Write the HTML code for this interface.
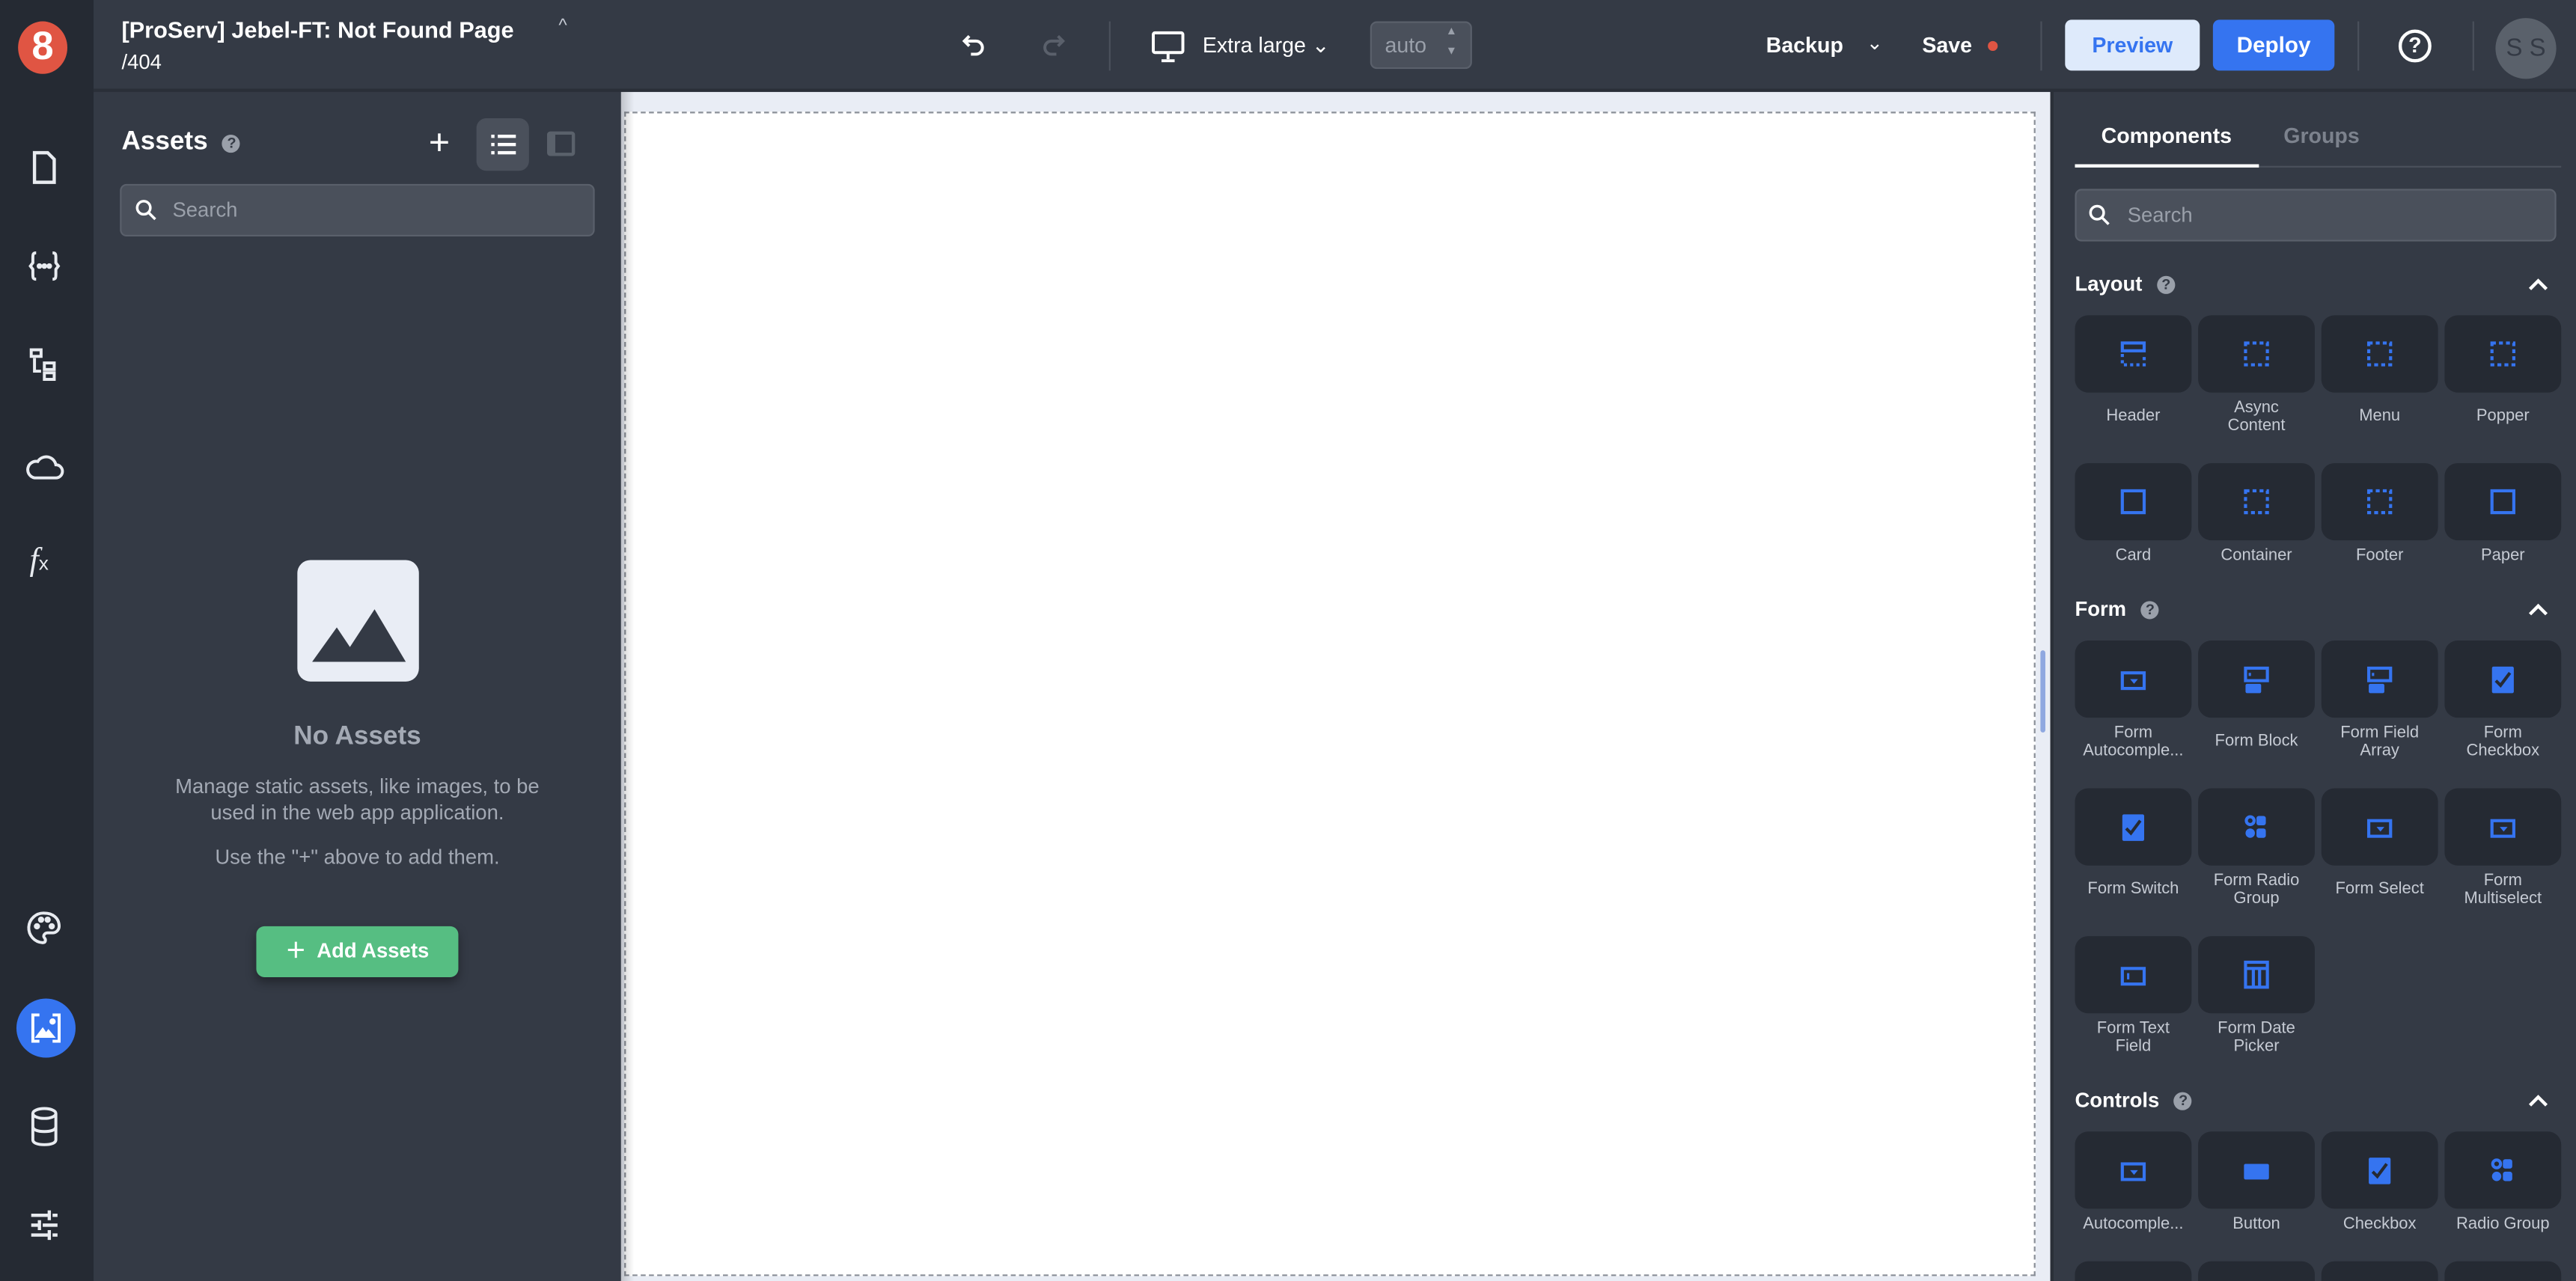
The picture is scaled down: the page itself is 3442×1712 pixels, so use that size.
<!DOCTYPE html>
<html><head><meta charset="utf-8">
<style>
html,body{margin:0;padding:0;width:3442px;height:1712px;overflow:hidden;background:#343a45;}
#w{width:1568px;height:780px;transform:scale(2.19515,2.19487);transform-origin:0 0;overflow:hidden;position:relative;background:#343a45;font-family:"Liberation Sans",sans-serif;color:#fff;}
.a{position:absolute;}
.rail{left:0;top:0;width:57px;height:780px;background:#252a33;}
.top{left:57px;top:0;width:1511px;height:54px;background:#343a45;border-bottom:2px solid #2a2f38;}
.panel{left:57px;top:56px;width:321px;height:724px;background:#343a45;}
.canvas{left:378px;top:56px;width:870px;height:724px;background:#e9edf5;}
.page{left:380px;top:68px;width:857px;height:707px;background:#fff;border:1px dashed #8a8f98;}
.right{left:1248px;top:56px;width:320px;height:724px;background:#343a45;border-left:2px solid #2a2f38;}
.tile{position:absolute;width:71px;height:47px;background:#252a33;border-radius:8px;}
.tile svg{position:absolute;left:26px;top:14px;width:19px;height:19px;}
.lbl{position:absolute;width:75px;text-align:center;font-size:10px;line-height:10.5px;color:#c5cad3;}
.sec{position:absolute;font-size:12.5px;font-weight:bold;color:#fff;}
.q{display:inline-block;width:11px;height:11px;border-radius:50%;background:#9aa0aa;color:#343a45;font-size:9px;line-height:11px;text-align:center;font-weight:bold;vertical-align:1px;margin-left:9px;}
</style></head><body><div id="w">
<div class="a rail"></div>
<div class="a top"></div>
<div class="a panel"></div>
<div class="a canvas"></div>
<div class="a page"></div>
<div class="a" style="left:1242px;top:396px;width:3px;height:50px;background:#8fa8e0;border-radius:2px"></div>
<div class="a right"></div>

<!-- rail -->
<div class="a" style="left:11px;top:13px;width:30px;height:32px;border-radius:50%;background:#e05543;text-align:center;font-weight:bold;font-size:24px;line-height:32px;">8</div>
<svg class="a" style="left:15px;top:90px" width="24" height="24" viewBox="0 0 24 24" fill="none" stroke="#e8ebf0" stroke-width="2"><path d="M6 3h8l4 4v14H6z"/></svg>
<svg class="a" style="left:15px;top:150px" width="24" height="24" viewBox="0 0 24 24" fill="none" stroke="#e8ebf0" stroke-width="1.8"><path d="M7 4c-2 0-2 1-2 3v3l-1.5 2L5 14v3c0 2 0 3 2 3M17 4c2 0 2 1 2 3v3l1.5 2L19 14v3c0 2 0 3-2 3"/><circle cx="9" cy="12" r=".8" fill="#e8ebf0"/><circle cx="12" cy="12" r=".8" fill="#e8ebf0"/><circle cx="15" cy="12" r=".8" fill="#e8ebf0"/></svg>
<svg class="a" style="left:15px;top:210px" width="24" height="24" viewBox="0 0 24 24" fill="none" stroke="#e8ebf0" stroke-width="1.8"><rect x="4" y="3" width="6" height="4"/><path d="M6 8v8h4"/><rect x="12" y="11" width="6" height="4"/><rect x="12" y="17" width="6" height="4"/></svg>
<svg class="a" style="left:14px;top:272px" width="26" height="24" viewBox="0 0 26 24" fill="none" stroke="#e8ebf0" stroke-width="1.8"><path d="M7 19h13a4 4 0 0 0 0-8 6 6 0 0 0-11-2 5 5 0 0 0-2 10z"/></svg>
<div class="a" style="left:18px;top:330px;font-family:'Liberation Serif',serif;font-style:italic;font-size:20px;color:#e8ebf0">f<span style="font-size:12px;font-style:normal;font-family:'Liberation Sans'">x</span></div>
<svg class="a" style="left:15px;top:553px" width="24" height="24" viewBox="0 0 24 24" fill="none" stroke="#e8ebf0" stroke-width="1.8"><path d="M12 3a9 9 0 0 0-1 18c2 0 2-2 1-3s0-3 2-3h3a4 4 0 0 0 4-4c0-5-4-8-9-8z"/><circle cx="7.5" cy="11" r="1" fill="#e8ebf0"/><circle cx="10" cy="7" r="1" fill="#e8ebf0"/><circle cx="14" cy="7" r="1" fill="#e8ebf0"/><circle cx="16.5" cy="11" r="1" fill="#e8ebf0"/></svg>
<div class="a" style="left:10px;top:608px;width:36px;height:36px;border-radius:50%;background:#3574f0"></div>
<svg class="a" style="left:16px;top:614px" width="24" height="24" viewBox="0 0 24 24" fill="none" stroke="#fff" stroke-width="1.8"><path d="M8 4H4v16h4M16 4h4v16h-4"/><path d="M7 17l3-4 2 3 1.5-2 2.5 3z" fill="#fff"/><circle cx="16" cy="8" r="1" fill="#fff"/></svg>
<svg class="a" style="left:15px;top:673px" width="24" height="26" viewBox="0 0 24 26" fill="none" stroke="#e8ebf0" stroke-width="1.8"><ellipse cx="12" cy="5" rx="7" ry="3"/><path d="M5 5v16c0 2 3 3 7 3s7-1 7-3V5M5 13c0 2 3 3 7 3s7-1 7-3"/></svg>
<svg class="a" style="left:15px;top:734px" width="24" height="24" viewBox="0 0 24 24" fill="none" stroke="#e8ebf0" stroke-width="2"><path d="M4 6h10M17 6h3M15 3v6M4 12h4M11 12h9M9 9v6M4 18h10M17 18h3M15 15v6"/></svg>

<!-- top bar -->
<div class="a" style="left:74px;top:10px;font-size:14px;font-weight:bold">[ProServ] Jebel-FT: Not Found Page</div>
<div class="a" style="left:340px;top:10px;font-size:11px;color:#c5cad3">&#94;</div>
<div class="a" style="left:74px;top:31px;font-size:12.5px">/404</div>
<svg class="a" style="left:584px;top:19px" width="18" height="18" viewBox="0 0 18 18" fill="none" stroke="#fff" stroke-width="1.8"><path d="M6 3L3 6l3 3M3 6h7a4 4 0 0 1 0 8H7"/></svg>
<svg class="a" style="left:632px;top:19px" width="18" height="18" viewBox="0 0 18 18" fill="none" stroke="#5a606b" stroke-width="1.8"><path d="M12 3l3 3-3 3M15 6H8a4 4 0 0 0 0 8h3"/></svg>
<div class="a" style="left:675px;top:13px;width:1px;height:30px;background:#4a505b"></div>
<svg class="a" style="left:700px;top:17px" width="22" height="22" viewBox="0 0 22 22" fill="none" stroke="#fff" stroke-width="1.8"><rect x="2" y="3" width="18" height="12" rx="1"/><path d="M11 15v4M7 20h8"/></svg>
<div class="a" style="left:732px;top:20px;font-size:13px">Extra large &#8964;</div>
<div class="a" style="left:834px;top:13px;width:62px;height:29px;background:#4a505b;border:1px solid #5a606b;border-radius:4px;box-sizing:border-box"></div>
<div class="a" style="left:843px;top:20px;font-size:13px;color:#9aa0aa">auto</div>
<div class="a" style="left:880px;top:14px;font-size:7px;color:#9aa0aa;line-height:12px">&#9650;<br>&#9660;</div>
<div class="a" style="left:1075px;top:20px;font-size:13px;font-weight:bold">Backup</div>
<div class="a" style="left:1136px;top:19px;font-size:12px">&#8964;</div>
<div class="a" style="left:1170px;top:20px;font-size:13px;font-weight:bold">Save</div>
<div class="a" style="left:1210px;top:25px;width:6px;height:6px;border-radius:50%;background:#e05543"></div>
<div class="a" style="left:1242px;top:13px;width:1px;height:30px;background:#4a505b"></div>
<div class="a" style="left:1257px;top:12px;width:82px;height:31px;background:#deeafb;border-radius:4px;color:#3574f0;font-weight:bold;font-size:13px;text-align:center;line-height:31px">Preview</div>
<div class="a" style="left:1347px;top:12px;width:74px;height:31px;background:#3574f0;border-radius:4px;font-weight:bold;font-size:13.5px;text-align:center;line-height:31px">Deploy</div>
<div class="a" style="left:1435px;top:13px;width:1px;height:30px;background:#4a505b"></div>
<div class="a" style="left:1460px;top:18px;width:16px;height:16px;border:2px solid #fff;border-radius:50%;text-align:center;font-size:13px;font-weight:bold;line-height:16px">?</div>
<div class="a" style="left:1505px;top:13px;width:1px;height:30px;background:#4a505b"></div>
<div class="a" style="left:1519px;top:11px;width:37px;height:37px;border-radius:50%;background:#5a616b;color:#343a45;font-size:15px;text-align:center;line-height:37px">S S</div>

<!-- assets panel -->
<div class="a" style="left:74px;top:78px;font-size:16px;font-weight:bold">Assets<span class="q" style="font-size:9px">?</span></div>
<div class="a" style="left:261px;top:74px;font-size:22px;font-weight:300">+</div>
<div class="a" style="left:290px;top:72px;width:32px;height:32px;background:#4a505b;border-radius:6px"></div>
<svg class="a" style="left:297px;top:79px" width="18" height="18" viewBox="0 0 18 18" fill="#fff"><rect x="2" y="3" width="2" height="2"/><rect x="6" y="3" width="11" height="2"/><rect x="2" y="8" width="2" height="2"/><rect x="6" y="8" width="11" height="2"/><rect x="2" y="13" width="2" height="2"/><rect x="6" y="13" width="11" height="2"/></svg>
<div class="a" style="left:333px;top:80px;width:17px;height:15px;border:2px solid #5a616b;border-left-width:5px;border-radius:2px;box-sizing:border-box"></div>
<div class="a" style="left:73px;top:112px;width:289px;height:32px;background:#4a505b;border:1px solid #5a606b;border-radius:4px;box-sizing:border-box"></div>
<svg class="a" style="left:82px;top:121px" width="14" height="14" viewBox="0 0 14 14" fill="none" stroke="#fff" stroke-width="1.6"><circle cx="5.5" cy="5.5" r="4"/><path d="M8.5 8.5l4 4"/></svg>
<div class="a" style="left:105px;top:121px;font-size:12.5px;color:#9aa0aa">Search</div>
<div class="a" style="left:181px;top:341px;width:74px;height:74px;background:#e9edf5;border-radius:8px"></div>
<svg class="a" style="left:181px;top:341px" width="74" height="74" viewBox="0 0 74 74"><path d="M9 62l15-21 8 12 15-23 19 32z" fill="#343a45"/></svg>
<div class="a" style="left:57px;top:440px;width:321px;text-align:center;font-size:16px;font-weight:bold;color:#a3a9b4">No Assets</div>
<div class="a" style="left:95px;top:471px;width:245px;text-align:center;font-size:12.5px;line-height:16px;color:#a3a9b4">Manage static assets, like images, to be used in the web app application.</div>
<div class="a" style="left:57px;top:515px;width:321px;text-align:center;font-size:12.5px;color:#a3a9b4">Use the "+" above to add them.</div>
<div class="a" style="left:156px;top:564px;width:123px;height:31px;background:#56be82;border-radius:5px;box-shadow:0 3px 6px rgba(0,0,0,.35);font-size:12.5px;font-weight:bold;line-height:31px;text-align:center">&#65291;&nbsp; Add Assets</div>
<div class="a" style="left:378px;top:56px;width:8px;height:724px;background:linear-gradient(90deg,rgba(0,0,0,.18),rgba(0,0,0,0))"></div>

<!-- right panel -->
<div class="a" style="left:1279px;top:75px;font-size:13px;font-weight:bold">Components</div>
<div class="a" style="left:1390px;top:75px;font-size:13px;font-weight:bold;color:#7c828d">Groups</div>
<div class="a" style="left:1263px;top:101px;width:296px;height:1px;background:#4a505b"></div>
<div class="a" style="left:1263px;top:100px;width:112px;height:2px;background:#fff"></div>
<div class="a" style="left:1263px;top:115px;width:293px;height:32px;background:#4a505b;border:1px solid #5a606b;border-radius:4px;box-sizing:border-box"></div>
<svg class="a" style="left:1271px;top:124px" width="14" height="14" viewBox="0 0 14 14" fill="none" stroke="#fff" stroke-width="1.6"><circle cx="5.5" cy="5.5" r="4"/><path d="M8.5 8.5l4 4"/></svg>
<div class="a" style="left:1295px;top:124px;font-size:12.5px;color:#9aa0aa">Search</div>

<div class="sec" style="left:1263px;top:166px">Layout<span class="q">?</span></div>
<div class="sec" style="left:1263px;top:364px">Form<span class="q">?</span></div>
<div class="sec" style="left:1263px;top:663px">Controls<span class="q">?</span></div>
<svg class="a" style="left:1538px;top:168px" width="14" height="10" viewBox="0 0 14 10" fill="none" stroke="#fff" stroke-width="2"><path d="M2 8l5-5 5 5"/></svg>
<svg class="a" style="left:1538px;top:366px" width="14" height="10" viewBox="0 0 14 10" fill="none" stroke="#fff" stroke-width="2"><path d="M2 8l5-5 5 5"/></svg>
<svg class="a" style="left:1538px;top:665px" width="14" height="10" viewBox="0 0 14 10" fill="none" stroke="#fff" stroke-width="2"><path d="M2 8l5-5 5 5"/></svg>

<svg width="0" height="0" style="position:absolute">
<defs>
<g id="dash"><rect x="3" y="3" width="14" height="14" fill="none" stroke="#3574f0" stroke-width="2" stroke-dasharray="2.5 2"/></g>
<g id="sq"><rect x="3" y="3" width="14" height="14" fill="none" stroke="#3574f0" stroke-width="2"/></g>
<g id="hdr"><rect x="3" y="3" width="14" height="5" fill="none" stroke="#3574f0" stroke-width="2"/><path d="M3 10v7h14v-7" fill="none" stroke="#3574f0" stroke-width="2" stroke-dasharray="2 2"/></g>
<g id="sel"><rect x="3" y="6" width="14" height="10" fill="none" stroke="#3574f0" stroke-width="2"/><path d="M8 10h5l-2.5 3z" fill="#3574f0"/></g>
<g id="blk"><rect x="3" y="3" width="14" height="8" fill="none" stroke="#3574f0" stroke-width="2"/><rect x="5" y="6" width="1.5" height="2" fill="#3574f0"/><rect x="3" y="13" width="10" height="6" rx="1" fill="#3574f0"/></g>
<g id="chk"><rect x="3" y="2" width="14" height="17" rx="1" fill="#3574f0"/><path d="M5.5 11l3 3 6-8" fill="none" stroke="#252a33" stroke-width="2"/></g>
<g id="rad"><circle cx="6" cy="6" r="2.5" fill="none" stroke="#3574f0" stroke-width="2"/><circle cx="6" cy="14" r="3" fill="#3574f0"/><rect x="10" y="3" width="6" height="6" rx="1.5" fill="#3574f0"/><rect x="10" y="11" width="6" height="6" rx="1.5" fill="#3574f0"/></g>
<g id="txt"><rect x="3" y="6" width="14" height="10" fill="none" stroke="#3574f0" stroke-width="2"/><rect x="6" y="9" width="1.5" height="4" fill="#3574f0"/></g>
<g id="dat"><rect x="3" y="2" width="14" height="16" fill="none" stroke="#3574f0" stroke-width="2"/><path d="M3 6h14M8 6v12M12 6v12" stroke="#3574f0" stroke-width="2"/></g>
<g id="btn"><rect x="2" y="6" width="16" height="10" rx="1" fill="#3574f0"/></g>
</defs></svg>

<div class="tile" style="left:1263px;top:192px"><svg viewBox="0 0 20 20"><use href="#hdr"/></svg></div>
<div class="tile" style="left:1338px;top:192px"><svg viewBox="0 0 20 20"><use href="#dash"/></svg></div>
<div class="tile" style="left:1413px;top:192px"><svg viewBox="0 0 20 20"><use href="#dash"/></svg></div>
<div class="tile" style="left:1488px;top:192px"><svg viewBox="0 0 20 20"><use href="#dash"/></svg></div>
<div class="lbl" style="left:1261px;top:249px">Header</div>
<div class="lbl" style="left:1336px;top:244px">Async<br>Content</div>
<div class="lbl" style="left:1411px;top:249px">Menu</div>
<div class="lbl" style="left:1486px;top:249px">Popper</div>

<div class="tile" style="left:1263px;top:282px"><svg viewBox="0 0 20 20"><use href="#sq"/></svg></div>
<div class="tile" style="left:1338px;top:282px"><svg viewBox="0 0 20 20"><use href="#dash"/></svg></div>
<div class="tile" style="left:1413px;top:282px"><svg viewBox="0 0 20 20"><use href="#dash"/></svg></div>
<div class="tile" style="left:1488px;top:282px"><svg viewBox="0 0 20 20"><use href="#sq"/></svg></div>
<div class="lbl" style="left:1261px;top:334px">Card</div>
<div class="lbl" style="left:1336px;top:334px">Container</div>
<div class="lbl" style="left:1411px;top:334px">Footer</div>
<div class="lbl" style="left:1486px;top:334px">Paper</div>

<div class="tile" style="left:1263px;top:390px"><svg viewBox="0 0 20 20"><use href="#sel"/></svg></div>
<div class="tile" style="left:1338px;top:390px"><svg viewBox="0 0 20 20"><use href="#blk"/></svg></div>
<div class="tile" style="left:1413px;top:390px"><svg viewBox="0 0 20 20"><use href="#blk"/></svg></div>
<div class="tile" style="left:1488px;top:390px"><svg viewBox="0 0 20 20"><use href="#chk"/></svg></div>
<div class="lbl" style="left:1261px;top:442px">Form<br>Autocomple...</div>
<div class="lbl" style="left:1336px;top:447px">Form Block</div>
<div class="lbl" style="left:1411px;top:442px">Form Field<br>Array</div>
<div class="lbl" style="left:1486px;top:442px">Form<br>Checkbox</div>

<div class="tile" style="left:1263px;top:480px"><svg viewBox="0 0 20 20"><use href="#chk"/></svg></div>
<div class="tile" style="left:1338px;top:480px"><svg viewBox="0 0 20 20"><use href="#rad"/></svg></div>
<div class="tile" style="left:1413px;top:480px"><svg viewBox="0 0 20 20"><use href="#sel"/></svg></div>
<div class="tile" style="left:1488px;top:480px"><svg viewBox="0 0 20 20"><use href="#sel"/></svg></div>
<div class="lbl" style="left:1261px;top:537px">Form Switch</div>
<div class="lbl" style="left:1336px;top:532px">Form Radio<br>Group</div>
<div class="lbl" style="left:1411px;top:537px">Form Select</div>
<div class="lbl" style="left:1486px;top:532px">Form<br>Multiselect</div>

<div class="tile" style="left:1263px;top:570px"><svg viewBox="0 0 20 20"><use href="#txt"/></svg></div>
<div class="tile" style="left:1338px;top:570px"><svg viewBox="0 0 20 20"><use href="#dat"/></svg></div>
<div class="lbl" style="left:1261px;top:622px">Form Text<br>Field</div>
<div class="lbl" style="left:1336px;top:622px">Form Date<br>Picker</div>

<div class="tile" style="left:1263px;top:689px"><svg viewBox="0 0 20 20"><use href="#sel"/></svg></div>
<div class="tile" style="left:1338px;top:689px"><svg viewBox="0 0 20 20"><use href="#btn"/></svg></div>
<div class="tile" style="left:1413px;top:689px"><svg viewBox="0 0 20 20"><use href="#chk"/></svg></div>
<div class="tile" style="left:1488px;top:689px"><svg viewBox="0 0 20 20"><use href="#rad"/></svg></div>
<div class="lbl" style="left:1261px;top:741px">Autocomple...</div>
<div class="lbl" style="left:1336px;top:741px">Button</div>
<div class="lbl" style="left:1411px;top:741px">Checkbox</div>
<div class="lbl" style="left:1486px;top:741px">Radio Group</div>

<div class="tile" style="left:1263px;top:768px"></div>
<div class="tile" style="left:1338px;top:768px"></div>
<div class="tile" style="left:1413px;top:768px"></div>
<div class="tile" style="left:1488px;top:768px"></div>
</div></body></html>
